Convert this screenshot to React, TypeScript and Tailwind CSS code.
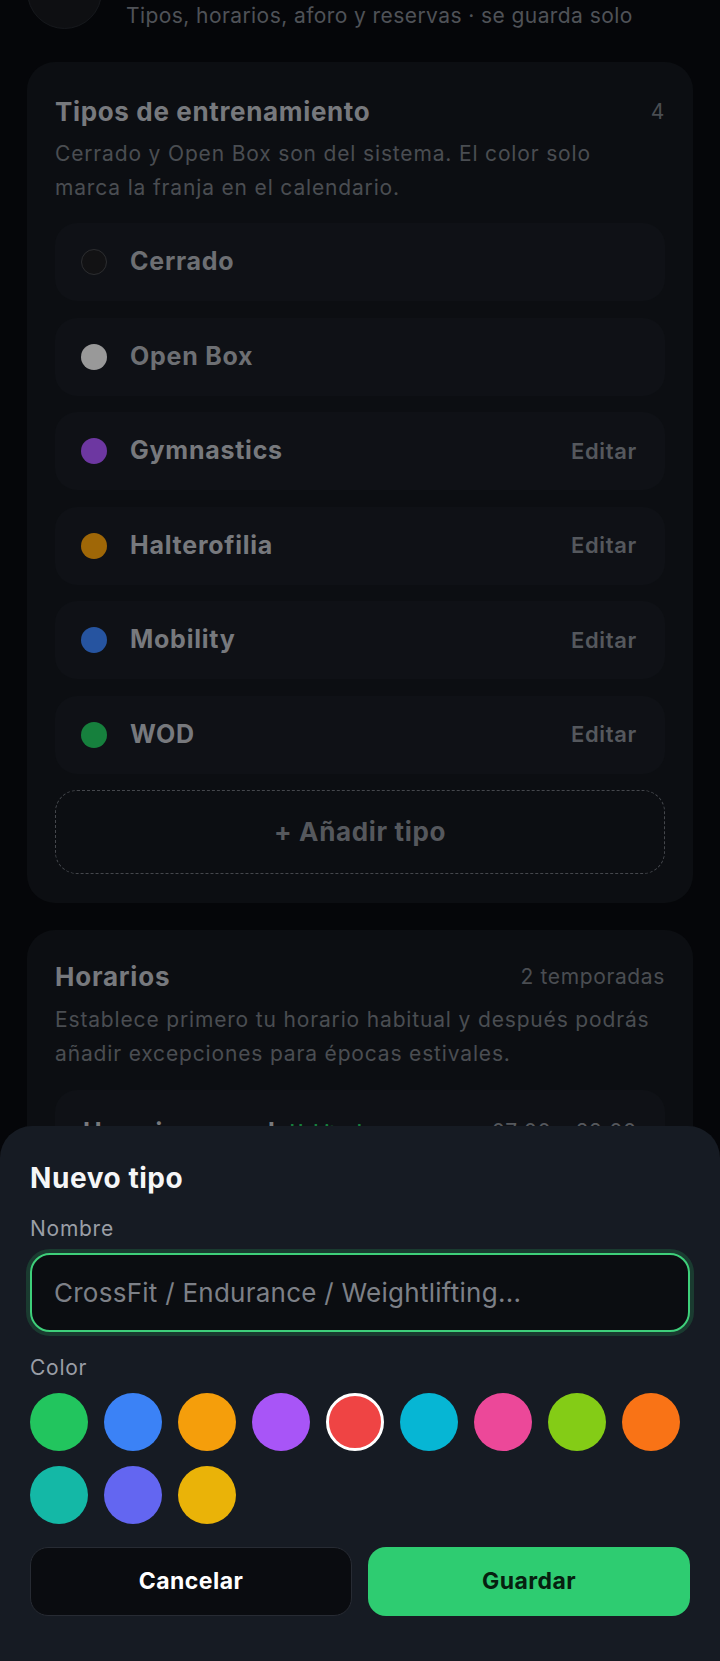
import React from "react";

const types = [
  { name: "Cerrado", dot: "bg-[#1c1d20] border border-[#45464a]", system: true },
  { name: "Open Box", dot: "bg-[#ececec]", system: true },
  { name: "Gymnastics", dot: "bg-[#a855f7]", system: false },
  { name: "Halterofilia", dot: "bg-[#f59e0b]", system: false },
  { name: "Mobility", dot: "bg-[#3b82f6]", system: false },
  { name: "WOD", dot: "bg-[#22c55e]", system: false },
];

const palette = [
  "bg-[#22c55e]",
  "bg-[#3b82f6]",
  "bg-[#f59e0b]",
  "bg-[#a855f7]",
  "bg-[#ef4444]",
  "bg-[#06b6d4]",
  "bg-[#ec4899]",
  "bg-[#84cc16]",
  "bg-[#f97316]",
  "bg-[#14b8a6]",
  "bg-[#6366f1]",
  "bg-[#eab308]",
];

const App = () => {
  const selected = 4;

  return (
    <div className="relative h-[1661px] overflow-hidden bg-[#080a0e] font-['Inter',sans-serif]">
      {/* --- page behind the sheet (scrolled) --- */}
      <div className="-mt-[46px] px-[27px]">
        <div className="flex items-start gap-6">
          <div className="h-[75px] w-[75px] shrink-0 rounded-full border border-[#23262c] bg-[#16181d]" />
          <div className="mt-[8px] flex flex-col">
            <h1 className="text-[28px] font-bold leading-[34px] text-[#e5e7eb]">Ajustes del box</h1>
            <p className="mt-[6px] text-[21px] leading-[28px] tracking-[0.02em] text-[#7a7e86]">
              Tipos, horarios, aforo y reservas · se guarda solo
            </p>
          </div>
        </div>

        {/* Tipos de entrenamiento */}
        <section className="mt-[32px] rounded-[28px] bg-[#13161c] px-[28px] pt-[34px] pb-[29px]">
          <div className="flex items-center justify-between">
            <h2 className="text-[26px] font-bold leading-[32px] tracking-[0.025em] text-[#b7bac0]">
              Tipos de entrenamiento
            </h2>
            <span className="text-[21px] tracking-[0.03em] text-[#72777e]">4</span>
          </div>
          <p className="mt-[9px] whitespace-nowrap text-[21px] leading-[34px] tracking-[0.04em] text-[#72777e]">
            Cerrado y Open Box son del sistema. El color solo
            <br />
            marca la franja en el calendario.
          </p>

          <div className="mt-[18px] flex flex-col gap-[16.5px]">
            {types.map((t) => (
              <div key={t.name} className="flex h-[78px] items-center rounded-[22px] bg-[#171b22] pl-[26px] pr-[28px]">
                <span className={`h-[26px] w-[26px] shrink-0 rounded-full ${t.dot}`} />
                <span
                  className={`ml-[23px] text-[25px] font-bold tracking-[0.03em] ${
                    t.system ? "text-[#a8abb1]" : "text-[#b7bac0]"
                  }`}
                >
                  {t.name}
                </span>
                {!t.system && (
                  <span className="ml-auto text-[22px] font-semibold tracking-[0.03em] text-[#83878f]">Editar</span>
                )}
              </div>
            ))}
          </div>

          <button className="mt-[16px] flex h-[84px] w-full items-center justify-center rounded-[22px] border-[1.5px] border-dashed border-[#6a6e76] text-[26px] font-bold tracking-[0.025em] text-[#83878f]">
            + Añadir tipo
          </button>
        </section>

        {/* Horarios */}
        <section className="mt-[27px] rounded-[28px] bg-[#13161c] px-[28px] pt-[31px] pb-[29px]">
          <div className="flex items-center justify-between">
            <h2 className="text-[26px] font-bold leading-[32px] tracking-[0.03em] text-[#b7bac0]">Horarios</h2>
            <span className="text-[21px] tracking-[0.03em] text-[#72777e]">2 temporadas</span>
          </div>
          <p className="mt-[10px] whitespace-nowrap text-[21px] leading-[34px] tracking-[0.04em] text-[#72777e]">
            Establece primero tu horario habitual y después podrás
            <br />
            añadir excepciones para épocas estivales.
          </p>
          <div className="mt-[19px] rounded-[22px] bg-[#171b22] px-[28px] pt-[26px] pb-[28px]">
            <div className="flex items-center">
              <span className="text-[25px] font-bold leading-[32px] tracking-[0.03em] text-[#b7bac0]">
                Horario normal
              </span>
              <span className="ml-[14px] text-[18px] font-semibold text-[#22c55e]">Habitual</span>
              <span className="ml-auto text-[21px] tracking-[0.03em] text-[#83878f]">07:00 – 22:00</span>
            </div>
            <p className="mt-2 text-[18px] text-[#72777e]">Lunes a sábado</p>
          </div>
        </section>
      </div>

      {/* --- scrim --- */}
      <div className="absolute inset-0 bg-black/35" />

      {/* --- bottom sheet --- */}
      <div className="absolute inset-x-0 bottom-0 rounded-t-[32px] bg-[#161b23] px-[30px] pt-[36px] pb-[45px]">
        <h3 className="text-[28px] font-bold leading-[32px] tracking-[0.02em] text-[#f5f6f7]">Nuevo tipo</h3>

        <label className="mt-[23px] block text-[21px] leading-[24px] tracking-[0.035em] text-[#9a9ea6]">
          Nombre
        </label>
        <input
          placeholder="CrossFit / Endurance / Weightlifting..."
          className="mt-[12px] block h-[79px] w-full rounded-[20px] border-2 border-[#3ecf7a] bg-[#0b0d11] px-[22px] text-[26px] tracking-[0.01em] text-white shadow-[0_0_0_4px_rgba(46,204,113,0.18)] outline-none placeholder:text-[#7d8087]"
        />

        <label className="mt-[24px] block text-[21px] leading-[24px] tracking-[0.035em] text-[#9a9ea6]">
          Color
        </label>
        <div className="mt-[13px] flex flex-wrap gap-x-[16px] gap-y-[15px]">
          {palette.map((c, i) => (
            <button
              key={c}
              className={`h-[58px] w-[58px] rounded-full ${c} ${i === selected ? "border-[3px] border-white" : ""}`}
            />
          ))}
        </div>

        <div className="mt-[23px] grid grid-cols-2 gap-[16px]">
          <button className="h-[69px] rounded-[18px] border border-[#272b33] bg-[#0a0c10] text-[23px] font-bold tracking-[0.02em] text-white">
            Cancelar
          </button>
          <button className="h-[69px] rounded-[18px] bg-[#2ecc71] text-[23px] font-bold tracking-[0.02em] text-[#06200f]">
            Guardar
          </button>
        </div>
      </div>
    </div>
  );
};

export default App;
